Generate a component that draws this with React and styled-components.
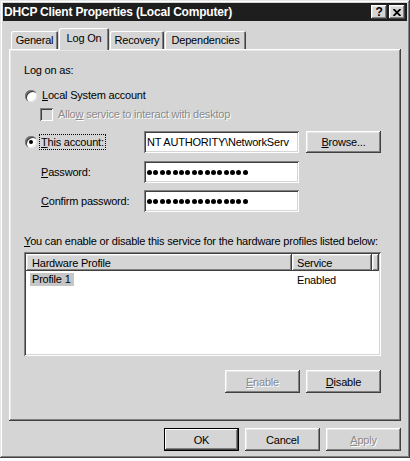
import styled, { createGlobalStyle, css } from "styled-components";

const FACE = "#d5d5d5";

const GlobalStyle = createGlobalStyle`
  body {
    margin: 0;
    background: #fff;
    font-family: "Liberation Sans", Arial, sans-serif;
    font-size: 11px;
    letter-spacing: -0.2px;
    color: #000;
  }
`;

const raised = css`
  box-shadow: inset -1px -1px #404040, inset 1px 1px #fff,
    inset -2px -2px #808080, inset 2px 2px #e6e6e6;
`;

const sunken = css`
  box-shadow: inset 1px 1px #808080, inset -1px -1px #fff,
    inset 2px 2px #404040, inset -2px -2px ${FACE};
`;

const Window = styled.div`
  width: 410px;
  height: 458px;
  box-sizing: border-box;
  padding: 3px;
  background: ${FACE};
  box-shadow: inset -1px -1px #404040, inset 1px 1px #e6e6e6,
    inset -2px -2px #808080, inset 2px 2px #fff;
  display: flex;
  flex-direction: column;
`;

const TitleBar = styled.div`
  height: 18px;
  background: #1e1e1e;
  display: flex;
  align-items: center;
  padding: 0 2px 0 1px;
`;

const Title = styled.div`
  flex: 1;
  color: #fff;
  font-weight: bold;
  font-size: 12px;
  letter-spacing: -0.2px;
`;

const CaptionButton = styled.div`
  width: 16px;
  height: 14px;
  background: ${FACE};
  ${raised};
  display: flex;
  align-items: center;
  justify-content: center;
  font-weight: bold;
  font-size: 12px;
  margin-left: ${(p) => (p.$gap ? "2px" : "0")};
`;

const Body = styled.div`
  padding: 7px 6px 0 6px;
  display: flex;
  flex-direction: column;
`;

const TabRow = styled.div`
  height: 21px;
  display: flex;
  align-items: flex-end;
  gap: 1px;
  padding-left: 2px;
`;

const Tab = styled.div`
  position: relative;
  z-index: 1;
  box-sizing: border-box;
  width: ${(p) => p.$w}px;
  height: ${(p) => (p.$active ? 22 : 18)}px;
  margin-bottom: ${(p) => (p.$active ? -1 : 0)}px;
  background: ${FACE};
  border-radius: 2px 2px 0 0;
  box-shadow: inset 1px 1px #fff, inset -1px 0 #404040, inset -2px 0 #808080;
  display: flex;
  align-items: center;
  justify-content: center;
  padding-bottom: ${(p) => (p.$active ? 3 : 0)}px;
`;

const Panel = styled.div`
  height: 372px;
  box-sizing: border-box;
  padding: 15px 20px 0 15px;
  ${raised};
  display: flex;
  flex-direction: column;
`;

const Line = styled.div`
  height: 13px;
  line-height: 13px;
  margin-top: ${(p) => p.$mt || 0}px;
  display: flex;
  align-items: center;
  padding-left: ${(p) => p.$indent || 0}px;
`;

const U = styled.span`
  text-decoration: underline;
  text-underline-offset: 1px;
`;

const Disabled = styled.span`
  color: #8a8a8a;
  text-shadow: 1px 1px #fff;
`;

const Radio = styled.span`
  width: 12px;
  height: 12px;
  border-radius: 50%;
  background: #fff;
  box-shadow: inset 1px 1px #808080, inset 2px 2px #404040,
    inset -1px -1px #e6e6e6;
  margin-right: 5px;
  flex: none;
  display: flex;
  align-items: center;
  justify-content: center;
  &::after {
    content: "";
    width: 4px;
    height: 4px;
    border-radius: 50%;
    background: ${(p) => (p.$checked ? "#000" : "transparent")};
  }
`;

const Check = styled.span`
  width: 13px;
  height: 13px;
  box-sizing: border-box;
  background: ${FACE};
  ${sunken};
  margin-right: 5px;
  flex: none;
`;

const FieldRow = styled.div`
  display: flex;
  align-items: center;
  height: 22px;
  margin-top: ${(p) => p.$mt}px;
`;

const RadioSlot = styled.div`
  width: 17px;
  padding-left: 1px;
  box-sizing: border-box;
  display: flex;
`;

const Label = styled.div`
  width: 103px;
`;

const Focus = styled.span`
  outline: 1px dotted #000;
  outline-offset: 1px;
`;

const Field = styled.div`
  width: 155px;
  height: 22px;
  box-sizing: border-box;
  background: #fff;
  ${sunken};
  display: flex;
  align-items: center;
  padding: 0 3px;
  gap: 1.4px;
  overflow: hidden;
  white-space: nowrap;
`;

const Dot = styled.span`
  width: 5px;
  height: 5px;
  border-radius: 50%;
  background: #000;
  flex: none;
`;

const Button = styled.div`
  width: 75px;
  height: 23px;
  box-sizing: border-box;
  background: ${FACE};
  display: flex;
  align-items: center;
  justify-content: center;
  ${(p) =>
    p.$default
      ? css`
          box-shadow: inset 0 0 0 1px #000, inset -2px -2px #404040,
            inset 2px 2px #fff, inset -3px -3px #808080;
        `
      : raised};
`;

const BrowseButton = styled(Button)`
  margin-left: 7px;
  height: 22px;
`;

const List = styled.div`
  margin-top: 4px;
  height: 104px;
  box-sizing: border-box;
  padding: 2px;
  background: #fff;
  ${sunken};
  display: flex;
  flex-direction: column;
`;

const HeaderRow = styled.div`
  display: flex;
  height: 17px;
`;

const HeaderCell = styled.div`
  width: ${(p) => (p.$w ? `${p.$w}px` : "auto")};
  flex: ${(p) => (p.$w ? "none" : 1)};
  box-sizing: border-box;
  background: ${FACE};
  ${raised};
  padding-left: ${(p) => p.$pad || 0}px;
  display: flex;
  align-items: center;
`;

const ItemRow = styled.div`
  display: flex;
  height: 13px;
  margin-top: 2px;
  align-items: center;
`;

const ItemCell = styled.div`
  width: ${(p) => p.$w}px;
  padding-left: ${(p) => p.$pad}px;
  box-sizing: border-box;
`;

const Selected = styled.span`
  background: #c6c6c6;
  padding: 0 3px 0 2px;
  line-height: 13px;
  display: inline-block;
`;

const ButtonRow = styled.div`
  display: flex;
  justify-content: flex-end;
  gap: 6px;
  margin-top: ${(p) => p.$mt}px;
`;

function Password() {
  return (
    <Field>
      {Array.from({ length: 16 }, (_, i) => (
        <Dot key={i} />
      ))}
    </Field>
  );
}

export default function App() {
  return (
    <>
      <GlobalStyle />
      <Window>
        <TitleBar>
          <Title>DHCP Client Properties (Local Computer)</Title>
          <CaptionButton>?</CaptionButton>
          <CaptionButton $gap>
            <svg width="8" height="7" viewBox="0 0 8 7">
              <path d="M0.5 0 L7.5 7 M7.5 0 L0.5 7" stroke="#000" strokeWidth="1.8" />
            </svg>
          </CaptionButton>
        </TitleBar>

        <Body>
          <TabRow>
            <Tab $w={47}>General</Tab>
            <Tab $w={50} $active>Log On</Tab>
            <Tab $w={54}>Recovery</Tab>
            <Tab $w={81}>Dependencies</Tab>
          </TabRow>

          <Panel>
            <Line>Log on as:</Line>
            <Line $mt={12} $indent={1}>
              <Radio />
              <span><U>L</U>ocal System account</span>
            </Line>
            <Line $mt={6} $indent={16}>
              <Check />
              <Disabled>Allo<U>w</U> service to interact with desktop</Disabled>
            </Line>

            <FieldRow $mt={10}>
              <RadioSlot>
                <Radio $checked />
              </RadioSlot>
              <Label>
                <Focus><U>T</U>his account:</Focus>
              </Label>
              <Field>NT AUTHORITY\NetworkServ</Field>
              <BrowseButton><U>B</U>rowse...</BrowseButton>
            </FieldRow>
            <FieldRow $mt={8}>
              <RadioSlot />
              <Label><U>P</U>assword:</Label>
              <Password />
            </FieldRow>
            <FieldRow $mt={7}>
              <RadioSlot />
              <Label><U>C</U>onfirm password:</Label>
              <Password />
            </FieldRow>

            <Line $mt={23}>
              <span><U>Y</U>ou can enable or disable this service for the hardware profiles listed below:</span>
            </Line>
            <List>
              <HeaderRow>
                <HeaderCell $w={266} $pad={6}>Hardware Profile</HeaderCell>
                <HeaderCell $w={80} $pad={5}>Service</HeaderCell>
                <HeaderCell />
              </HeaderRow>
              <ItemRow>
                <ItemCell $w={266} $pad={4}>
                  <Selected>Profile 1</Selected>
                </ItemCell>
                <ItemCell $w={80} $pad={5}>Enabled</ItemCell>
              </ItemRow>
            </List>

            <ButtonRow $mt={14}>
              <Button><Disabled><U>E</U>nable</Disabled></Button>
              <Button><U>D</U>isable</Button>
            </ButtonRow>
          </Panel>

          <ButtonRow $mt={7}>
            <Button $default>OK</Button>
            <Button>Cancel</Button>
            <Button><Disabled><U>A</U>pply</Disabled></Button>
          </ButtonRow>
        </Body>
      </Window>
    </>
  );
}
